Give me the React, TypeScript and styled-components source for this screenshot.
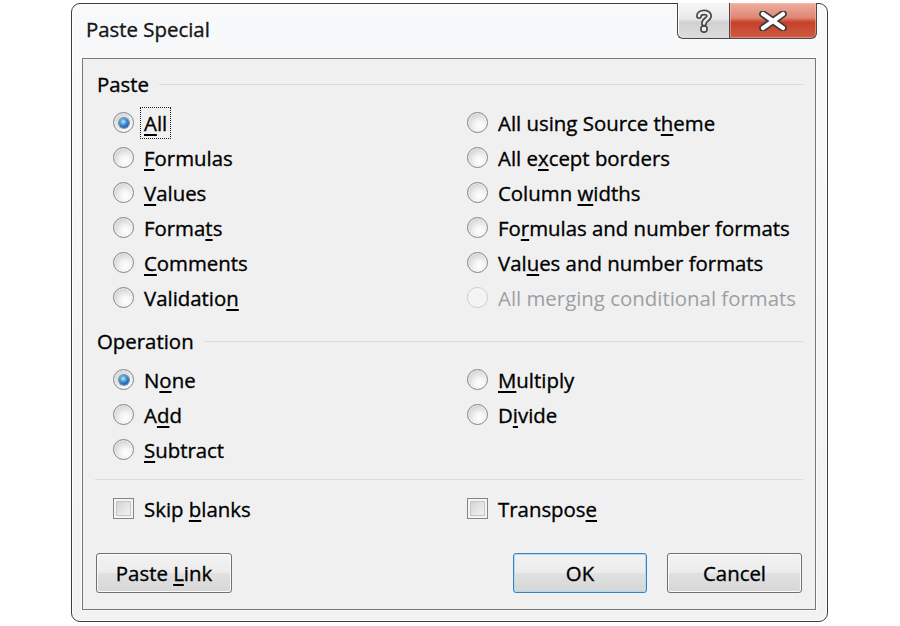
import React from "react";
import styled, { createGlobalStyle, css } from "styled-components";

const Global = createGlobalStyle`
  html, body { margin: 0; padding: 0; background: #ffffff; }
  body { font-family: "Open Sans", "Noto Sans", "DejaVu Sans", sans-serif; }
  *, *::before, *::after { box-sizing: border-box; }
`;

const FONT = "20.4px";

const inkText = css`
  -webkit-text-stroke: 0.35px currentColor;
`;

const Page = styled.div`
  width: 900px;
  height: 626px;
  padding: 3px 0 0 71px;
  background: #ffffff;
  overflow: hidden;
`;

const Window = styled.div`
  width: 757px;
  height: 619px;
  border: 1px solid #3d3d3d;
  border-radius: 9px;
  background: linear-gradient(180deg, #f8f9fa 0%, #f3f4f5 60%, #f1f2f3 100%);
  box-shadow: inset 0 0 0 1px rgba(255, 255, 255, 0.85);
  display: flex;
  flex-direction: column;
`;

const TitleBar = styled.div`
  height: 54px;
  display: flex;
  align-items: flex-start;
  padding: 0 10px 0 14px;
`;

const Title = styled.div`
  flex: 1;
  margin-top: 13px;
  font-size: ${FONT};
  line-height: 24px;
  color: #151515;
  ${inkText}
`;

const Caption = styled.div`
  display: flex;
  height: 36px;
  margin-top: -1px;
`;

const CaptionButton = styled.div<{ $kind: "help" | "close" }>`
  height: 36px;
  display: flex;
  align-items: center;
  justify-content: center;
  border: 1px solid #474747;
  border-top: none;
  ${(p) =>
    p.$kind === "help"
      ? css`
          width: 52px;
          border-right: none;
          border-bottom-left-radius: 6px;
          background: linear-gradient(180deg, #f7f7f7 0%, #e9e9e9 45%, #d1d1d1 55%, #dcdcdc 100%);
          box-shadow: inset 1px 0 0 #ffffff;
        `
      : css`
          width: 88px;
          border-bottom-right-radius: 6px;
          background: linear-gradient(180deg, #edaea1 0%, #df8672 42%, #c6412a 55%, #cf5a42 100%);
          box-shadow: inset 0 0 0 1px rgba(255, 200, 190, 0.45);
        `}
`;

const Client = styled.div`
  flex: 1;
  margin: 0 11px 11px 10px;
  border: 1px solid #777777;
  box-shadow: 0 0 0 1px #fbfbfb;
  background: #f0f0f0;
  padding: 10px 12px 16px 12px;
  display: flex;
  flex-direction: column;
`;

const SectionHeader = styled.div<{ $gap?: number }>`
  height: 30px;
  display: flex;
  align-items: center;
  gap: 10px;
  padding-left: 2px;
  margin-top: ${(p) => p.$gap ?? 0}px;
  font-size: ${FONT};
  line-height: 24px;
  color: #000;
  ${inkText}
`;

const Rule = styled.div`
  flex: 1;
  height: 1px;
  background: #d3dde4;
`;

const FullRule = styled.div`
  height: 1px;
  background: #d3dde4;
  margin-top: 12px;
`;

const OptionGrid = styled.div<{ $rows: number; $gap?: number }>`
  display: grid;
  grid-template-columns: 354px 1fr;
  grid-template-rows: repeat(${(p) => p.$rows}, 35px);
  grid-auto-flow: column;
  margin: ${(p) => p.$gap ?? 6}px 0 0 18px;
`;

const Option = styled.div<{ $disabled?: boolean }>`
  display: flex;
  align-items: center;
  gap: 10px;
  font-size: ${FONT};
  line-height: 24px;
  white-space: nowrap;
  color: ${(p) => (p.$disabled ? "#9c9fa3" : "#000000")};
  ${(p) => !p.$disabled && inkText}
`;

const OptionText = styled.span<{ $focused?: boolean }>`
  ${(p) =>
    p.$focused &&
    css`
      outline: 1px dotted #1a1a1a;
      outline-offset: 3px;
    `}
`;

const Key = styled.u`
  text-decoration-thickness: 1.5px;
  text-underline-offset: 3px;
`;

const RadioRing = styled.span<{ $disabled?: boolean }>`
  width: 21px;
  height: 21px;
  flex: none;
  border-radius: 50%;
  display: flex;
  align-items: center;
  justify-content: center;
  border: 1px solid ${(p) => (p.$disabled ? "#cbcbcb" : "#858585")};
  background: ${(p) =>
    p.$disabled
      ? "#f3f3f3"
      : "radial-gradient(circle at 62% 68%, #ffffff 0%, #f4f4f4 30%, #d6d6d6 70%, #bcbcbc 100%)"};
  box-shadow: inset 0 0 0 1px rgba(255, 255, 255, 0.55);
`;

const RadioDot = styled.span`
  width: 10px;
  height: 10px;
  border-radius: 50%;
  background: radial-gradient(circle at 42% 36%, #c4e6fc 0%, #5aa6e0 30%, #1f62ab 65%, #0d3a70 100%);
  box-shadow: 0 0 0 1px rgba(25, 60, 105, 0.55);
`;

const CheckBox = styled.span`
  width: 21px;
  height: 21px;
  flex: none;
  border: 1px solid #858585;
  background: linear-gradient(135deg, #cbcbcb 0%, #e4e4e4 50%, #f7f7f7 100%);
  box-shadow: inset 0 0 0 2px #f4f4f4, inset 0 0 0 3px #c6c6c6;
`;

const ButtonRow = styled.div`
  margin-top: auto;
  display: flex;
  justify-content: space-between;
  padding: 0 1px;
`;

const ButtonGroup = styled.div`
  display: flex;
  gap: 20px;
`;

const Button = styled.button<{ $w: number; $default?: boolean }>`
  width: ${(p) => p.$w}px;
  height: 40px;
  padding: 0;
  font-family: inherit;
  font-size: ${FONT};
  line-height: 24px;
  color: #000;
  ${inkText}
  border-radius: 3px;
  border: 1px solid ${(p) => (p.$default ? "#3c83bd" : "#707070")};
  background: linear-gradient(180deg, #f3f3f3 0%, #ececec 48%, #e0e0e0 52%, #d6d6d6 100%);
  box-shadow: inset 0 0 0 1px ${(p) => (p.$default ? "#a8dcf7" : "#fafafa")};
  display: flex;
  align-items: center;
  justify-content: center;
`;

type Opt = { pre: string; key?: string; post?: string; checked?: boolean; disabled?: boolean; focused?: boolean };

const pasteOptions: Opt[] = [
  { pre: "", key: "A", post: "ll", checked: true, focused: true },
  { pre: "", key: "F", post: "ormulas" },
  { pre: "", key: "V", post: "alues" },
  { pre: "Forma", key: "t", post: "s" },
  { pre: "", key: "C", post: "omments" },
  { pre: "Validatio", key: "n", post: "" },
  { pre: "All using Source t", key: "h", post: "eme" },
  { pre: "All e", key: "x", post: "cept borders" },
  { pre: "Column ", key: "w", post: "idths" },
  { pre: "Fo", key: "r", post: "mulas and number formats" },
  { pre: "Val", key: "u", post: "es and number formats" },
  { pre: "All merging conditional formats", disabled: true },
];

const operationOptions: Opt[] = [
  { pre: "N", key: "o", post: "ne", checked: true },
  { pre: "A", key: "d", post: "d" },
  { pre: "", key: "S", post: "ubtract" },
  { pre: "", key: "M", post: "ultiply" },
  { pre: "D", key: "i", post: "vide" },
];

const Label = ({ o }: { o: Opt }) => (
  <OptionText $focused={o.focused}>
    {o.pre}
    {o.key && <Key>{o.key}</Key>}
    {o.post}
  </OptionText>
);

const RadioOption = ({ o }: { o: Opt }) => (
  <Option $disabled={o.disabled}>
    <RadioRing $disabled={o.disabled}>{o.checked && <RadioDot />}</RadioRing>
    <Label o={o} />
  </Option>
);

const HelpIcon = () => (
  <svg width="20" height="26" viewBox="0 0 20 26">
    <g fill="none" strokeLinecap="round" strokeLinejoin="round">
      <path d="M5 8 C5 3.5 15 3 15 8 C15 11.5 10 11.5 10 15.5" stroke="#4a4a4a" strokeWidth="6" />
      <circle cx="10" cy="21" r="1.2" stroke="#4a4a4a" strokeWidth="5.5" />
      <path d="M5 8 C5 3.5 15 3 15 8 C15 11.5 10 11.5 10 15.5" stroke="#efefef" strokeWidth="2.6" />
      <circle cx="10" cy="21" r="1.2" stroke="#efefef" strokeWidth="2.2" />
    </g>
  </svg>
);

const CloseIcon = () => (
  <svg width="30" height="20" viewBox="0 0 30 20">
    <g fill="none" strokeLinecap="round">
      <path d="M5 3 L25 17 M25 3 L5 17" stroke="#3a3a3a" strokeWidth="7.5" />
      <path d="M5 3 L25 17 M25 3 L5 17" stroke="#ffffff" strokeWidth="4.2" />
    </g>
  </svg>
);

export default function App() {
  return (
    <>
      <Global />
      <Page>
        <Window>
          <TitleBar>
            <Title>Paste Special</Title>
            <Caption>
              <CaptionButton $kind="help">
                <HelpIcon />
              </CaptionButton>
              <CaptionButton $kind="close">
                <CloseIcon />
              </CaptionButton>
            </Caption>
          </TitleBar>
          <Client>
            <SectionHeader>
              <span>Paste</span>
              <Rule />
            </SectionHeader>
            <OptionGrid $rows={6}>
              {pasteOptions.map((o, i) => (
                <RadioOption key={i} o={o} />
              ))}
            </OptionGrid>
            <SectionHeader $gap={11}>
              <span>Operation</span>
              <Rule />
            </SectionHeader>
            <OptionGrid $rows={3}>
              {operationOptions.map((o, i) => (
                <RadioOption key={i} o={o} />
              ))}
            </OptionGrid>
            <FullRule />
            <OptionGrid $rows={1} $gap={11}>
              <Option>
                <CheckBox />
                <Label o={{ pre: "Skip ", key: "b", post: "lanks" }} />
              </Option>
              <Option>
                <CheckBox />
                <Label o={{ pre: "Transpos", key: "e", post: "" }} />
              </Option>
            </OptionGrid>
            <ButtonRow>
              <Button $w={136}>
                <Label o={{ pre: "Paste ", key: "L", post: "ink" }} />
              </Button>
              <ButtonGroup>
                <Button $w={134} $default>
                  OK
                </Button>
                <Button $w={135}>Cancel</Button>
              </ButtonGroup>
            </ButtonRow>
          </Client>
        </Window>
      </Page>
    </>
  );
}
